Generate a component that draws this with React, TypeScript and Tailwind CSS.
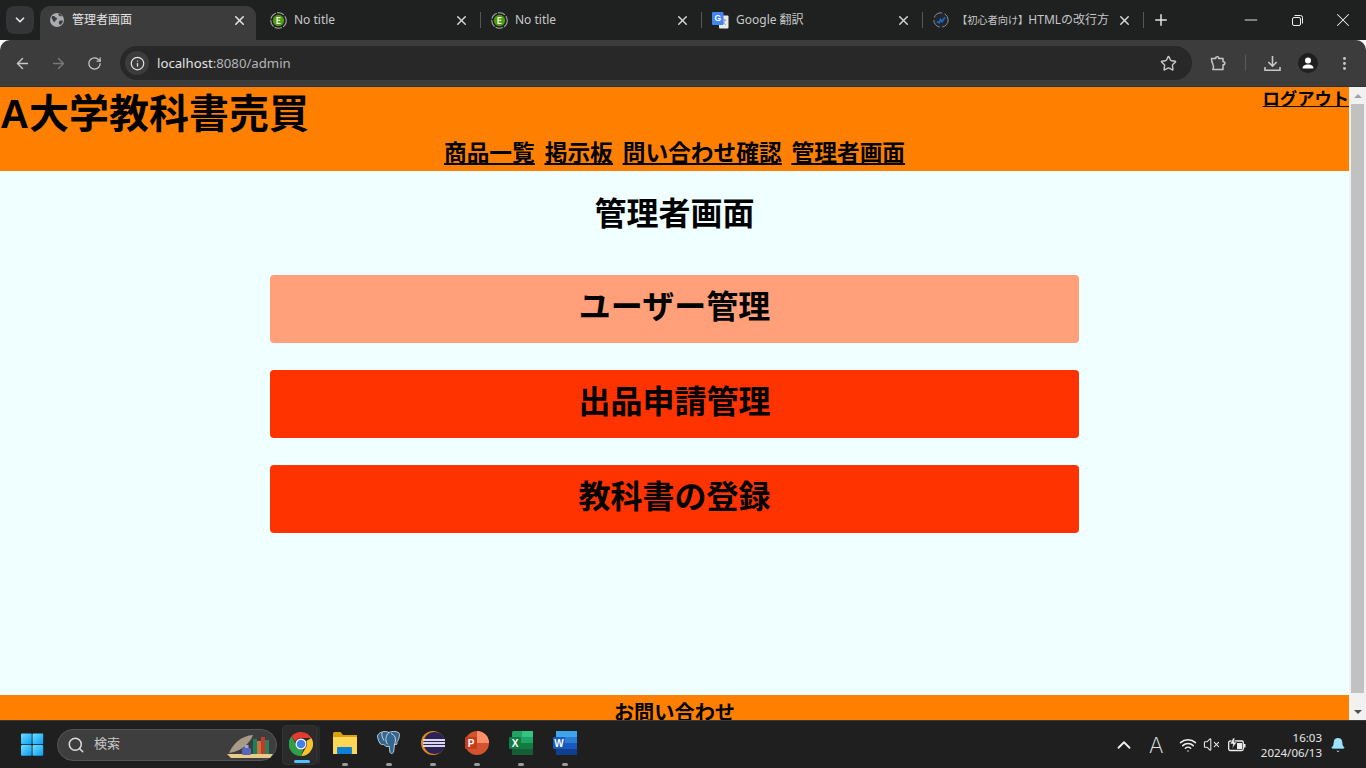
import React from "react";
import { ChevronDown, X, ArrowLeft, ArrowRight, RotateCw, Info, Star, MoreVertical, Plus, Minus, ChevronUp, Search, Wifi, VolumeX, Bell } from "lucide-react";

const F = "font-['Liberation_Sans','Noto_Sans_CJK_JP',sans-serif]";
const UI = "font-['Noto_Sans','Noto_Sans_CJK_JP',sans-serif]";

function EIcon() {
  return (
    <svg width="17" height="17" viewBox="0 0 16 16">
      <circle cx="8" cy="8" r="7.3" fill="none" stroke="#a8a8a8" strokeWidth="1" strokeDasharray="7 1.2" />
      <circle cx="8" cy="8" r="5.3" fill="#4f9a10" />
      <path d="M6 4.8h4v1.1H7.3v1.5h2.3v1.1H7.3v1.6H10v1.1H6z" fill="#e8f2da" />
    </svg>
  );
}
function Globe() {
  return (
    <svg width="16" height="16" viewBox="0 0 16 16">
      <circle cx="8" cy="8" r="7" fill="#a8abaf" />
      <path d="M3 4.2c1.4-.4 2.6.2 3.4 1 .6.7 1.6.6 1.8 1.4.2.9-1 1.1-1.6 1.7-.5.6-.2 1.6-1 1.7-1 .1-1.4-1.5-2-2.3C3.100 7 2.300 5.700 3 4.200zM9.500 1.600c1.500.3 2.900 1.300 3.700 2.600-1 .3-2 .2-2.700-.3-.7-.5-1.500-1.300-1-2.300zM10.500 9c1-.6 2.500-.6 3.400-.2-.2 1.700-1.100 3.200-2.500 4.100-.8-.3-1.300-1-1.500-1.900-.1-.8 0-1.500.6-2z" fill="#3c3c3c" />
    </svg>
  );
}
function GTranslate() {
  return (
    <svg width="17" height="17" viewBox="0 0 17 17">
      <rect x="7" y="3.500" width="9.500" height="13" rx="1" fill="#e8eaed" />
      <path d="M11.800 6.500v1M9.200 8h5M13 8c-.5 2-1.700 3.300-3.400 4.300M10.300 9.500c.7 1.300 2 2.300 3.600 3" stroke="#8a8d91" strokeWidth=".9" fill="none" />
      <rect x="0" y="0" width="11.500" height="13" rx="1" fill="#4285f4" />
      <text x="5.700" y="9.300" textAnchor="middle" fontSize="8.500" fontWeight="700" fill="#fff" fontFamily="Liberation Sans">G</text>
    </svg>
  );
}
function SwirlIcon() {
  return (
    <svg width="16" height="16" viewBox="0 0 16 16">
      <circle cx="8" cy="8" r="7.200" fill="#23262a" stroke="#8b8f93" strokeWidth="1" strokeDasharray="10 2.500" />
      <path d="M3.800 9.800l2.400.8 1.300-3 1.400 2.200 3-4.600" fill="none" stroke="#1c68c4" strokeWidth="1.700" />
    </svg>
  );
}
function Tab({ icon, title, width, closeAt }: { icon: React.ReactNode; title: string; width: number; closeAt: number }) {
  return (
    <div className="flex items-center h-[34px] pb-[6px] shrink-0 relative" style={{ width }}>
      <div className="w-[17px] ml-[10px] flex justify-center shrink-0">{icon}</div>
      <span className={`ml-[7px] text-[12px] text-[#c7c8c9] whitespace-nowrap overflow-hidden ${UI}`}>{title}</span>
      <X size={15} strokeWidth={2.3} className="absolute text-[#d6d7d8]" style={{ left: closeAt }} />
      <div className="absolute right-0 top-[6px] w-px h-4 bg-[#55585a]" />
    </div>
  );
}

function Taskbar() {
  return (
    <div className="h-[48px] shrink-0 bg-[#1f1f1f] border-t border-[#3a3a3a] flex items-center relative text-white">
      <svg width="24" height="24" viewBox="0 0 24 24" className="ml-[20px] shrink-0">
        <defs>
          <linearGradient id="w" x1="0" y1="0" x2="1" y2="1">
            <stop offset="0" stopColor="#6ce0ff" />
            <stop offset="1" stopColor="#0a9cf5" />
          </linearGradient>
        </defs>
        <rect x="1" y="0.500" width="10.700" height="10.700" rx="1" fill="url(#w)" />
        <rect x="12.500" y="0.500" width="10.700" height="10.700" rx="1" fill="url(#w)" />
        <rect x="1" y="12" width="10.700" height="10.700" rx="1" fill="url(#w)" />
        <rect x="12.500" y="12" width="10.700" height="10.700" rx="1" fill="url(#w)" />
      </svg>
      <div className="ml-[13px] w-[220px] h-[32px] rounded-full bg-[#3e3e3e] border border-[#555] flex items-center relative shrink-0">
        <Search size={18} strokeWidth={2} className="ml-[9px] text-[#dcdcdc]" />
        <span className={`ml-[9px] text-[13px] leading-none -mt-[2px] text-[#c8c8c8] ${UI}`}>検索</span>
        <svg width="48" height="30" viewBox="0 0 48 30" className="absolute right-[2px] top-0">
          <path d="M1 24h46l-3 4H5z" fill="#e8cd8a" />
          <path d="M3 23C8 12 16 6 27 5 24 13 17 19 8 22z" fill="#a79a86" />
          <rect x="16" y="18" width="9" height="7" rx="1.500" fill="#5866b8" />
          <rect x="18.500" y="15" width="4" height="3" fill="#9aa4d8" />
          <rect x="27" y="9" width="4" height="15" fill="#17825a" />
          <rect x="31" y="11" width="4" height="13" fill="#c9733a" />
          <rect x="35" y="7" width="4" height="17" fill="#c0392b" />
          <rect x="39" y="10" width="4" height="14" fill="#2e7d5b" />
        </svg>
      </div>
      <div className="ml-[5px] w-[35px] h-[40px] rounded-[4px] bg-[#2b2b2b] border border-[#333] flex items-center justify-center relative shrink-0">
        <svg width="24" height="24" viewBox="0 0 24 24" className="ml-[3px] -mt-[2px]">
          <path d="M12 0a12 12 0 0 1 10.400 6H12a6 6 0 0 0-5.600 3.800L2.500 4.300A12 12 0 0 1 12 0z" fill="#e33b2e" />
          <path d="M22.400 6A12 12 0 0 1 12 24l5-8.800A6 6 0 0 0 17.300 9z" fill="#fbc02d" />
          <path d="M12 24A12 12 0 0 1 2.500 4.300L7 12a6 6 0 0 0 7.500 5.500z" fill="#2e9e48" />
          <circle cx="12" cy="12" r="5.500" fill="#fff" />
          <circle cx="12" cy="12" r="4.300" fill="#3f80ea" />
        </svg>
        <div className="absolute bottom-[1px] left-[11px] w-[16px] h-[3px] rounded-full bg-[#4cc2ff]" />
      </div>
      <div className="w-[3px] h-[40px] bg-[#2a2a2a] rounded-r shrink-0" />
      <div className="flex ml-[3px]">
        <Slot>
          <svg width="24" height="22" viewBox="0 0 24 22">
            <path d="M0 1.500Q0 0 1.500 0h6l2.500 3H24v19H0z" fill="#d9a20c" />
            <path d="M0 5h24v17H0z" fill="#fcd654" />
            <rect x="4" y="15" width="15" height="7" rx="1" fill="#0f7fd6" />
          </svg>
        </Slot>
        <Slot>
          <svg width="24" height="24" viewBox="0 0 24 24">
            <path d="M5 1c2.500-1 5-.5 7 .5 2.500-1.500 7-1.500 9.500 0 2 2 .5 5.500-.5 8-.8 1.500-1.500 1.800-1 3 .5 1-1 1.300-2.500.8-.3 2.500-.5 6-1 8-1 1.500-3 1.500-3.500 0-.4-1.500-.5-4-.7-6-2 .5-3 .5-4.500-1C6.300 12.500 5 14.500 3.500 13 1.500 10.500.500 7 .5 5 .8 3 3 1.500 5 1z" fill="#336791" stroke="#e6ecf0" strokeWidth=".8" />
            <path d="M12 1.500C9.500 3 8.500 7 9 10c.2 1.500 1 2.500 1.800 3.300M14 2.500c3 1 4.500 3.500 4.500 6.500 0 2-.6 3-.9 4.800M5 1.500c-.5 3 .5 5.500 2 8" stroke="#e6ecf0" strokeWidth=".8" fill="none" />
          </svg>
        </Slot>
        <Slot>
          <svg width="24" height="24" viewBox="0 0 24 24">
            <circle cx="12" cy="12" r="12" fill="#e08a1e" />
            <circle cx="13.500" cy="12" r="11" fill="#2c2255" />
            <rect x="2" y="8" width="22" height="2" fill="#d8d6e8" />
            <rect x="2" y="11" width="22" height="2" fill="#d8d6e8" />
            <rect x="2" y="14" width="22" height="2" fill="#d8d6e8" />
          </svg>
        </Slot>
        <Slot>
          <svg width="24" height="24" viewBox="0 0 24 24">
            <circle cx="12" cy="12" r="12" fill="#d35230" />
            <path d="M12 0a12 12 0 0 1 12 12H12z" fill="#ff8f6b" />
            <rect x="0" y="6" width="12" height="12" rx="1" fill="#c43e1c" />
            <text x="6" y="15.500" textAnchor="middle" fontSize="10" fontWeight="700" fill="#fff" fontFamily="Liberation Sans">P</text>
          </svg>
        </Slot>
        <Slot>
          <svg width="24" height="24" viewBox="0 0 24 24">
            <rect x="3" y="0" width="21" height="24" rx="1.500" fill="#21a366" />
            <rect x="13" y="0" width="11" height="6" fill="#33c481" />
            <rect x="13" y="6" width="11" height="6" fill="#21a366" />
            <rect x="3" y="12" width="21" height="6" fill="#107c41" />
            <rect x="3" y="18" width="21" height="6" fill="#185c37" />
            <rect x="0" y="6" width="12" height="12" rx="1" fill="#107c41" />
            <text x="6" y="15.500" textAnchor="middle" fontSize="10" fontWeight="700" fill="#fff" fontFamily="Liberation Sans">X</text>
          </svg>
        </Slot>
        <Slot>
          <svg width="24" height="24" viewBox="0 0 24 24">
            <rect x="3" y="0" width="21" height="6" fill="#41a5ee" />
            <rect x="3" y="6" width="21" height="6" fill="#2b7cd3" />
            <rect x="3" y="12" width="21" height="6" fill="#185abd" />
            <rect x="3" y="18" width="21" height="6" fill="#103f91" />
            <rect x="0" y="6" width="12" height="12" rx="1" fill="#185abd" />
            <text x="6" y="15.500" textAnchor="middle" fontSize="10" fontWeight="700" fill="#fff" fontFamily="Liberation Sans">W</text>
          </svg>
        </Slot>
      </div>
      <div className="ml-auto flex items-center h-full">
        <ChevronUp size={22} strokeWidth={2} className="text-[#eee]" />
        <span className="ml-[14px] text-[22px] font-['Inter',sans-serif] font-extralight text-[#e8e8e8] w-[14px] text-center leading-none">A</span>
        <Wifi size={18} strokeWidth={2} className="ml-[16px] text-[#f0f0f0]" />
        <VolumeX size={17} strokeWidth={1.5} className="ml-[6px] text-[#e8e8e8]" />
        <svg width="18" height="14" viewBox="0 0 18 14" className="ml-[8px]">
          <rect x=".7" y="3" width="14.600" height="9.500" rx="1.500" fill="none" stroke="#eee" strokeWidth="1.300" />
          <rect x="16" y="6" width="1.500" height="3.500" fill="#eee" />
          <path d="M5 0L2 6h3l-1 5 5-7H6l1-4z" fill="#eee" stroke="#1f1f1f" strokeWidth=".6" />
          <rect x="9" y="5" width="5" height="6" fill="#eee" />
        </svg>
        <div className={`ml-[15px] flex flex-col items-end text-[11.500px] leading-[15px] text-[#e6e6e6] w-[61px] ${UI}`}>
          <span>16:03</span>
          <span>2024/06/13</span>
        </div>
        <Bell size={16} fill="#9be3ff" strokeWidth={1} className="ml-[8px] mr-[20px] text-[#9be3ff]" />
      </div>
    </div>
  );
}
function Slot({ children }: { children: React.ReactNode }) {
  return (
    <div className="w-[44px] h-[47px] flex items-center justify-center relative shrink-0">
      <div className="-mt-[3px]">{children}</div>
      <div className="absolute bottom-[2px] left-[19px] w-[6px] h-[3px] rounded-full bg-[#9b9b9b]" />
    </div>
  );
}

export default function App() {
  const btn = "block w-[809px] h-[68px] rounded-[4px] text-center text-[32px] font-bold leading-[64px] text-black";
  return (
    <div className={`w-[1366px] h-[768px] overflow-hidden flex flex-col ${F}`}>
      <div className="h-[40px] bg-[#1f2020] flex items-end shrink-0 relative">
        <div className="w-[28px] h-[28px] rounded-[8px] bg-[#333536] ml-[6px] mb-[6px] flex items-center justify-center shrink-0">
          <ChevronDown size={14} strokeWidth={3} className="text-[#e3e3e3]" />
        </div>
        <div className="ml-[6px] mr-[4px] w-[216px] h-[34px] pb-[6px] bg-[#3c3c3c] rounded-t-[10px] flex items-center relative shrink-0">
          <div className="ml-[9px]"><Globe /></div>
          <span className={`ml-[7px] text-[12px] text-[#e3e3e3] whitespace-nowrap ${UI}`}>管理者画面</span>
          <X size={15} strokeWidth={2.5} className="absolute left-[192px] text-[#e3e3e3]" />
        </div>
        <Tab icon={<EIcon />} title="No title" width={221} closeAt={194} />
        <Tab icon={<EIcon />} title="No title" width={221} closeAt={194} />
        <Tab icon={<GTranslate />} title="Google 翻訳" width={221} closeAt={194} />
        <div className="flex items-center h-[34px] pb-[6px] w-[221px] shrink-0 relative">
          <div className="ml-[10px]"><SwirlIcon /></div>
          <span className={`ml-[8px] text-[12px] text-[#c7c8c9] whitespace-nowrap overflow-hidden w-[152px] ${UI}`}><span className="text-[10.200px]">【初心者向け】</span>HTMLの改行方法</span>
          <X size={15} strokeWidth={2.3} className="absolute left-[194px] text-[#d6d7d8]" />
          <div className="absolute right-0 top-[6px] w-px h-4 bg-[#55585a]" />
        </div>
        <div className="h-[34px] pb-[6px] flex items-center">
          <Plus size={18} strokeWidth={2} className="text-[#e3e3e3] ml-[8px]" />
        </div>
        <div className="absolute right-0 top-0 h-[40px] flex items-center text-[#f0f0f0]">
          <div className="w-[46px] flex justify-center"><Minus size={20} strokeWidth={1.1} /></div>
          <div className="w-[46px] flex justify-center">
            <svg width="11" height="11" viewBox="0 0 11 11" fill="none" stroke="currentColor" strokeWidth="1">
              <rect x=".5" y="2.500" width="8" height="8" rx="1.500" />
              <path d="M2.500 .5h6a2 2 0 0 1 2 2v6" />
            </svg>
          </div>
          <div className="w-[46px] flex justify-center"><X size={22} strokeWidth={1.1} /></div>
        </div>
      </div>

      <div className="h-[47px] bg-[#3c3c3c] rounded-t-[10px] flex items-center shrink-0 text-[#c7c7c7] border-b border-[#333]">
        <ArrowLeft size={17} strokeWidth={2} className="ml-[14px] text-[#c7c7c7]" />
        <ArrowRight size={17} strokeWidth={2} className="ml-[19px] text-[#77797a]" />
        <RotateCw size={15} strokeWidth={2} className="ml-[20px] text-[#c7c7c7]" />
        <div className="ml-[18px] w-[1072px] h-[34px] rounded-full bg-[#282828] flex items-center relative">
          <div className="ml-[5px] w-[24px] h-[24px] rounded-full bg-[#3c3c3c] flex items-center justify-center">
            <Info size={15} strokeWidth={2} className="text-[#e3e3e3]" />
          </div>
          <span className={`ml-[8px] mt-[1px] text-[13.200px] text-[#e3e3e3] ${UI}`}>localhost<span className="text-[#b5b6b7]">:8080/admin</span></span>
          <Star size={17} strokeWidth={2} className="absolute right-[15px] text-[#c7c7c7]" />
        </div>
        <svg width="17" height="17" viewBox="0 0 17 17" className="ml-[18px] shrink-0" fill="none" stroke="#c7c7c7" strokeWidth="1.500" strokeLinejoin="round">
          <path d="M1.500 3.500h4.300c-.5-2.500 3.400-2.500 2.900 0h4.300v3.300c2.500-.5 2.500 3.400 0 2.900v4.800H2.800c1-2 1-3.500 0-5.500-.8-1.500-1.300-3.500-1.300-5.500z" />
        </svg>
        <div className="ml-[18px] w-px h-[16px] bg-[#5a5a5a]" />
        <svg width="17" height="17" viewBox="0 0 17 17" className="ml-[18px] shrink-0" fill="none" stroke="#c7c7c7" strokeWidth="1.600">
          <path d="M8.500 1v10M4.300 7l4.200 4.200L12.700 7M1 12v3.300h15V12" />
        </svg>
        <div className="ml-[17px] w-[20px] h-[20px] rounded-full bg-[#1f1f1f] flex items-center justify-center shrink-0">
          <svg width="14" height="14" viewBox="0 0 14 14"><circle cx="7" cy="4.500" r="3" fill="#fff" /><path d="M1.500 12.500c0-3 2.500-4 5.500-4s5.500 1 5.500 4z" fill="#fff" /></svg>
        </div>
        <MoreVertical size={17} strokeWidth={2.2} className="ml-[18px] text-[#c7c7c7]" />
      </div>

      <div className="flex-1 flex min-h-0">
        <div className="flex-1 flex flex-col min-w-0 overflow-hidden bg-[#f0ffff]">
          <header className="h-[84px] bg-[#ff8000] shrink-0 relative text-black">
            <a className="absolute right-0 top-0 text-[17.300px] font-bold leading-[24px] underline whitespace-nowrap">ログアウト</a>
            <h1 className="text-[40px] font-bold leading-[54px] whitespace-nowrap">A大学教科書売買</h1>
            <nav className="-mt-[3px] flex justify-center gap-[10px] text-[22.700px] font-bold leading-[30px] underline">
              <a>商品一覧</a>
              <a>掲示板</a>
              <a>問い合わせ確認</a>
              <a>管理者画面</a>
            </nav>
          </header>
          <main className="h-[524px] shrink-0 flex flex-col items-center">
            <h2 className="mt-[21px] text-[32px] font-bold leading-[44px] text-black">管理者画面</h2>
            <a className={`mt-[39px] bg-[#ffa07a] ${btn}`}>ユーザー管理</a>
            <a className={`mt-[27px] bg-[#ff3300] ${btn}`}>出品申請管理</a>
            <a className={`mt-[27px] bg-[#ff3300] ${btn}`}>教科書の登録</a>
          </main>
          <footer className="bg-[#ff8000] flex-1 text-center text-[20.200px] font-bold leading-[37px] text-black">お問い合わせ</footer>
        </div>
        <div className="w-[17px] shrink-0 bg-[#f1f1f1] flex flex-col">
          <div className="h-[17px] flex items-center justify-center">
            <div className="w-0 h-0 border-x-[4px] border-x-transparent border-b-[4px] border-b-[#a3a3a3]" />
          </div>
          <div className="w-[13px] ml-[2px] flex-1 bg-[#c1c1c1] mb-[10px]" />
          <div className="h-[17px] flex items-center justify-center">
            <div className="w-0 h-0 border-x-[4px] border-x-transparent border-t-[4px] border-t-[#505050]" />
          </div>
        </div>
      </div>
      <Taskbar />
    </div>
  );
}
